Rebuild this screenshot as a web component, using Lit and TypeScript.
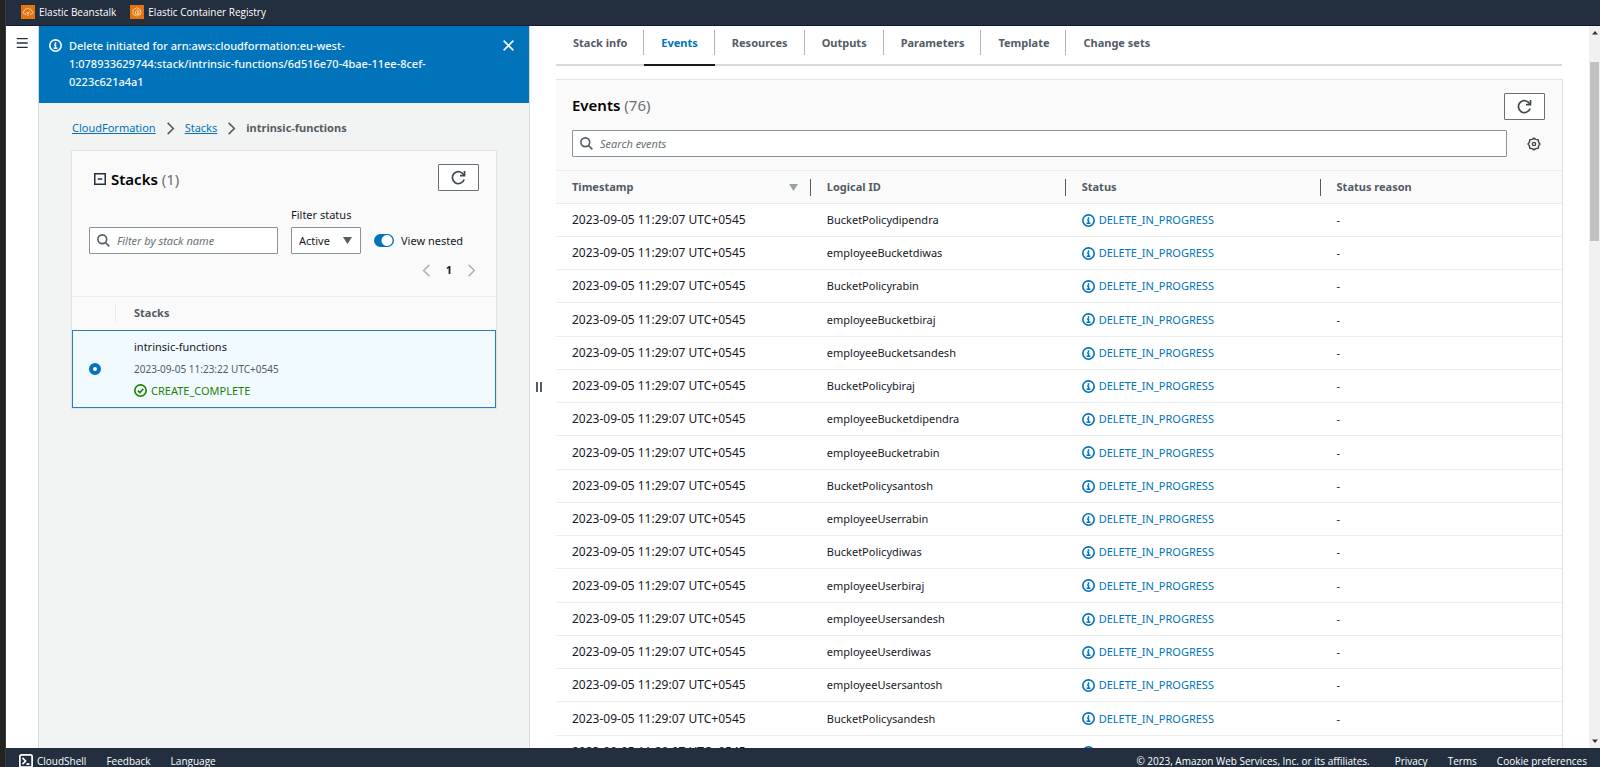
import { LitElement, html, css, svg } from "lit";
import { customElement, state } from "lit/decorators.js";

const LOGICAL_IDS = [
  "BucketPolicydipendra",
  "employeeBucketdiwas",
  "BucketPolicyrabin",
  "employeeBucketbiraj",
  "employeeBucketsandesh",
  "BucketPolicybiraj",
  "employeeBucketdipendra",
  "employeeBucketrabin",
  "BucketPolicysantosh",
  "employeeUserrabin",
  "BucketPolicydiwas",
  "employeeUserbiraj",
  "employeeUsersandesh",
  "employeeUserdiwas",
  "employeeUsersantosh",
  "BucketPolicysandesh",
  "employeeUserdipendra",
];

const TABS = ["Stack info", "Events", "Resources", "Outputs", "Parameters", "Template", "Change sets"];

const icon = (size: number, body: unknown) => html`<svg
  width=${size} height=${size} viewBox="0 0 16 16" fill="none"
  stroke="currentColor" stroke-width="2" aria-hidden="true">${body}</svg>`;

const infoIcon = (size = 13) => icon(size, svg`
  <circle cx="8" cy="8" r="7"/>
  <path d="M8 11.5V7.5H6.2M5.6 11.5h4.8M8 4v2" stroke-width="1.8"/>`);
const checkIcon = icon(13, svg`<circle cx="8" cy="8" r="7"/><path d="M4.8 8.2l2.4 2.3 4.2-4.4"/>`);
const closeIcon = icon(13, svg`<path d="M2 2l12 12M14 2L2 14"/>`);
const chevron = (size = 13) => icon(size, svg`<path d="M4.5 1l7 7-7 7"/>`);
const chevronLeft = icon(13, svg`<path d="M11.5 1l-7 7 7 7"/>`);
const searchIcon = icon(13, svg`<circle cx="6.5" cy="6.5" r="5.4"/><path d="M10.4 10.4L15.2 15.2"/>`);
const refreshIcon = icon(15, svg`<path d="M14 10.2A6.4 6.4 0 1 1 13.6 5.2" stroke-width="1.8"/><path d="M14.4 1v5H9.6" stroke-width="1.8"/>`);
const menuIcon = icon(14, svg`<path d="M2 3h12.500M2 8h12.500M2 13h12.500" stroke-width="1.5"/>`);
const gearIcon = icon(14, svg`
  <path d="M8 1.200l1.900 1.500 2.900.5.500 2.900L14.800 8l-1.500 1.900-.5 2.900-2.900.5L8 14.800l-1.900-1.500-2.900-.5-.5-2.900L1.200 8l1.500-1.900.5-2.900 2.900-.5z" stroke-width="1.700" stroke-linejoin="round"/>
  <circle cx="8" cy="8" r="1.900" stroke-width="1.600"/>`);
const collapseIcon = icon(12, svg`<path d="M1 1h14v14H1zM5 8h6"/>`);
const shellIcon = icon(14, svg`<rect x="1" y="1" width="14" height="14" rx="2"/><path d="M4 4.500l3.500 3.500L4 11.500M8.500 11.500H12"/>`);
const beanstalkIcon = html`<svg width="14" height="14" viewBox="0 0 28 28" aria-hidden="true">
  <rect width="28" height="28" fill="#e57310"/>
  <path d="M11 18H8c-4.500 0-4.500-6-.5-6.500C8 6.500 14 5 17 8.500c3-.5 4 1 4 3.500 4 .5 3.500 6 0 6h-3M14 22v-8M14 18l-3-3M14 16l4-3" fill="none" stroke="#ffe9d2" stroke-width="1.500"/></svg>`;
const registryIcon = html`<svg width="14" height="14" viewBox="0 0 28 28" aria-hidden="true">
  <rect width="28" height="28" fill="#e57310"/>
  <path d="M13 22.500l-7-4v-8.500l7.500-4.500 8 4.500v8.500L17 21M11 18v-5l4-3 3 2v6l-3 2.500zM15 13v6" fill="none" stroke="#ffe9d2" stroke-width="1.500"/></svg>`;

@customElement("app-root")
export class AppRoot extends LitElement {
  @state() private activeTab = "Events";

  static styles = css`
    :host {
      display: block;
      height: 100vh;
      overflow: hidden;
      font-family: "Noto Sans", "Open Sans", sans-serif;
      font-size: 11px;
      line-height: 18px;
      color: #16191f;
      background: #fff;
    }
    * { box-sizing: border-box; }
    svg { display: block; flex: none; }
    button, input, select { font: inherit; color: inherit; margin: 0; }
    button { background: none; border: 0; padding: 0; cursor: pointer; }
    a { color: inherit; text-decoration: none; }
    h2 { margin: 0; font-size: 15px; line-height: 20px; font-weight: 600; color: #000; }
    h2 span { font-weight: 400; color: #687078; }

    .shell { display: flex; height: 100%; }
    .edge { width: 6px; flex: none; background: #232323; border-right: 1px solid #3c3c3c; }
    .page { flex: 1; min-width: 0; display: flex; flex-direction: column; }

    .topbar {
      display: flex; align-items: center; gap: 14px; height: 26px; flex: none;
      padding: 0 15px 1px; background: #232f3e; border-bottom: 1px solid #0d1f35;
      color: #fff; font-family: "Open Sans", "Noto Sans", sans-serif; font-size: 10px; font-weight: 500;
    }
    .topbar a { display: flex; align-items: center; gap: 4px; }
    .body { flex: 1; min-height: 0; display: flex; }
    .rail { width: 32px; flex: none; padding-top: 10px; }
    .rail button { display: block; margin: 0 auto; color: #232f3e; }

    .side {
      width: 492px; flex: none; background: #f2f3f3;
      border-left: 1px solid #d5dbdb; border-right: 1px solid #d5dbdb;
    }
    .flash {
      display: flex; gap: 7px; padding: 11px 14px 11px 10px;
      background: #0073bb; color: #f5fbff; font-weight: 500; min-height: 77px;
    }
    .flash p { margin: 0; flex: 1; padding-right: 60px; }
    .flash svg { margin-top: 2px; }
    .flash button { align-self: flex-start; }
    .crumbs { display: flex; align-items: center; gap: 8px; padding: 16px 33px 14px; color: #545b64; font-weight: 700; }
    .crumbs a { color: #0073bb; text-decoration: underline; font-weight: 400; }

    .card { background: #fafafa; box-shadow: 0 0 1px 1px #e1e5e5; }
    .stacks { margin: 0 33px; }
    .stacks-head { display: flex; align-items: center; justify-content: space-between; padding: 13px 17px 0 22px; }
    .stacks-title { display: flex; align-items: center; gap: 5px; padding-top: 2px; }
    .stacks-title button { color: #232f3e; }
    .refresh {
      display: grid; place-items: center; width: 41px; height: 27px;
      background: #fff; border: 1px solid #687078; border-radius: 1px; color: #414750;
    }
    .filters { display: flex; align-items: flex-end; gap: 13px; padding: 15px 17px 0; }
    .search { display: flex; align-items: center; gap: 7px; height: 27px; padding: 0 7px; background: #fff; border: 1px solid #879596; border-radius: 1px; color: #545b64; }
    .search input { flex: 1; min-width: 0; border: 0; outline: 0; background: none; padding: 0; }
    .search input::placeholder { color: #687078; font-style: italic; opacity: 1; }
    .filters .search { width: 189px; }
    .status-filter { display: flex; flex-direction: column; gap: 3px; }
    .select { display: flex; align-items: center; position: relative; }
    .select select { appearance: none; width: 70px; height: 27px; padding: 0 7px; background: #fff; border: 1px solid #879596; border-radius: 1px; }
    .select svg { position: absolute; right: 9px; color: #545b64; pointer-events: none; }
    .toggle { display: flex; align-items: center; gap: 7px; height: 27px; }
    .toggle input {
      appearance: none; width: 20px; height: 13px; border-radius: 7px;
      background: radial-gradient(circle at 13px 50%, #fff 5px, #0073bb 6px);
    }
    .toggle input:not(:checked) { background: radial-gradient(circle at 7px 50%, #fff 5px, #687078 6px); }
    .pager { display: flex; justify-content: flex-end; align-items: center; gap: 11px; padding: 7px 18px 17px; color: #aab7b8; }
    .pager span { color: #16191f; font-weight: 700; padding: 0 2px; }
    table { width: 100%; border-collapse: collapse; table-layout: fixed; text-align: left; }
    th { font-weight: 700; color: #545b64; padding: 0; }
    .stack-table th { height: 33px; border-top: 1px solid #eaeded; }
    .stack-table .pick { width: 44px; }
    .stack-table .pick span { display: block; height: 18px; border-right: 1px solid #eaeded; }
    .stack-table .name { padding-left: 18px; }
    .stack-table tbody tr { outline: 1px solid #2b7bbd; outline-offset: -1px; background: #f1faff; height: 78px; }
    .stack-table td { padding: 0; }
    .stack-table td:first-child { padding-left: 17px; }
    .stack-table input { appearance: none; display: block; width: 12px; height: 12px; margin: 0; border: 4px solid #0073bb; border-radius: 50%; background: #fff; }
    .stack-name { display: flex; flex-direction: column; gap: 4px; }
    .stack-name small { font-size: 10px; color: #545b64; }
    .ok { display: flex; align-items: center; gap: 4px; color: #1d8102; }

    .splitter { width: 26px; flex: none; display: flex; align-items: center; justify-content: center; padding-right: 9px; }
    .splitter button { width: 6px; height: 10px; border: solid #545b64; border-width: 0 2px; }

    .main { flex: 1; min-width: 0; padding-right: 27px; overflow: hidden; }
    .tabs { display: flex; height: 40px; border-bottom: 2px solid #d5dbdb; padding-top: 4px; }
    .tabs button { position: relative; padding: 0 17px 9px; height: 36px; color: #545b64; font-weight: 700; border-bottom: 2px solid transparent; }
    .tabs button:not(:last-child)::after { content: ""; position: absolute; right: 0; top: 0; height: 25px; border-right: 1px solid #aab7b8; }
    .tabs .on { color: #0073bb; border-bottom-color: #16191f; }
    .events { margin-top: 14px; }
    .events-head { display: flex; justify-content: space-between; align-items: center; padding: 13px 17px 10px 16px; }
    .events-head h2 { padding-bottom: 3px; }
    .events-tools { display: flex; align-items: center; gap: 20px; padding: 0 21px 13px 16px; color: #414750; }
    .events-tools .search { flex: 1; }
    .events-table th { height: 33px; border-top: 1px solid #eaeded; border-bottom: 1px solid #eaeded; }
    .events-table .reason { width: 24%; }
    .head { display: flex; align-items: center; justify-content: space-between; height: 17px; padding: 0 12px 0 16px; border-right: 1px solid #545b64; }
    th:last-child .head { border: 0; }
    .head svg { color: #95a5a6; }
    .events-table tbody { background: #fff; }
    .events-table td { height: 33px; padding: 0 16px; border-bottom: 1px solid #eaeded; white-space: nowrap; }
    .events-table tr:nth-child(4n) td { height: 34px; }
    .events-table .time { font-size: 12px; }
    .info { display: flex; align-items: center; gap: 4px; color: #0073bb; }

    .scroll { width: 11px; flex: none; background: #f1f1f1; display: flex; flex-direction: column; align-items: center; justify-content: space-between; padding: 4px 0; }
    .thumb { width: 9px; height: 179px; background: #c1c1c1; margin: 27px 0 auto; }

    .footer {
      display: flex; align-items: center; gap: 20px; height: 19px; flex: none;
      padding: 7px 13px 0; background: #232f3e; color: #fff; overflow: hidden;
      font-family: "Open Sans", "Noto Sans", sans-serif; font-size: 10px; font-weight: 500;
    }
    .footer a { display: flex; align-items: center; gap: 4px; flex: none; }
    .footer .legal { margin-left: auto; padding-right: 5px; }
  `;

  render() {
    return html`
      <div class="shell">
        <div class="edge"></div>
        <div class="page">
          <nav class="topbar" aria-label="Favorites">
            <a href="#beanstalk">${beanstalkIcon}Elastic Beanstalk</a>
            <a href="#ecr">${registryIcon}Elastic Container Registry</a>
          </nav>
          <div class="body">
            <div class="rail"><button aria-label="Open menu">${menuIcon}</button></div>
            ${this.renderSide()}
            <div class="splitter"><button aria-label="Resize panel"></button></div>
            ${this.renderMain()}
            <div class="scroll">
              <svg width="6" height="5" viewBox="0 0 6 5"><path d="M0 4.500L3 1l3 3.500z" fill="#333"/></svg>
              <div class="thumb"></div>
              <svg width="6" height="5" viewBox="0 0 6 5"><path d="M0 .5L3 4 6 .5z" fill="#333"/></svg>
            </div>
          </div>
          <footer class="footer">
            <a href="#shell">${shellIcon}CloudShell</a>
            <a href="#feedback">Feedback</a>
            <a href="#language">Language</a>
            <span class="legal">© 2023, Amazon Web Services, Inc. or its affiliates.</span>
            <a href="#privacy">Privacy</a>
            <a href="#terms">Terms</a>
            <a href="#cookies">Cookie preferences</a>
          </footer>
        </div>
      </div>`;
  }

  private renderSide() {
    return html`
      <aside class="side">
        <div class="flash" role="status">
          ${infoIcon()}
          <p>Delete initiated for arn:aws:cloudformation:eu-west-1:078933629744:stack/intrinsic-functions/6d516e70-4bae-11ee-8cef-0223c621a4a1</p>
          <button aria-label="Dismiss">${closeIcon}</button>
        </div>
        <nav class="crumbs" aria-label="Breadcrumb">
          <a href="#cloudformation">CloudFormation</a>${chevron()}
          <a href="#stacks">Stacks</a>${chevron()}
          <span>intrinsic-functions</span>
        </nav>
        <section class="card stacks">
          <div class="stacks-head">
            <div class="stacks-title">
              <button aria-label="Collapse">${collapseIcon}</button>
              <h2>Stacks <span>(1)</span></h2>
            </div>
            <button class="refresh" aria-label="Refresh stacks">${refreshIcon}</button>
          </div>
          <div class="filters">
            <label class="search">${searchIcon}<input aria-label="Filter by stack name" placeholder="Filter by stack name" /></label>
            <div class="status-filter">
              <label for="status">Filter status</label>
              <div class="select">
                <select id="status"><option>Active</option></select>
                <svg width="9" height="7" viewBox="0 0 9 7" aria-hidden="true"><path d="M0 0h9L4.500 7z" fill="currentColor"/></svg>
              </div>
            </div>
            <label class="toggle"><input type="checkbox" role="switch" checked />View nested</label>
          </div>
          <div class="pager">
            <button aria-label="Previous page">${chevronLeft}</button><span>1</span><button aria-label="Next page">${chevron()}</button>
          </div>
          <table class="stack-table">
            <thead><tr><th class="pick"><span></span></th><th class="name">Stacks</th></tr></thead>
            <tbody>
              <tr>
                <td><input type="radio" name="stack" checked aria-label="intrinsic-functions" /></td>
                <td class="name">
                  <div class="stack-name">
                    <span>intrinsic-functions</span>
                    <small>2023-09-05 11:23:22 UTC+0545</small>
                    <span class="ok">${checkIcon}CREATE_COMPLETE</span>
                  </div>
                </td>
              </tr>
            </tbody>
          </table>
        </section>
      </aside>`;
  }

  private renderMain() {
    return html`
      <main class="main">
        <div class="tabs" role="tablist">
          ${TABS.map((name) => html`<button role="tab"
            class=${name === this.activeTab ? "on" : ""}
            aria-selected=${name === this.activeTab ? "true" : "false"}
            @click=${() => (this.activeTab = name)}>${name}</button>`)}
        </div>
        <section class="card events">
          <div class="events-head">
            <h2>Events <span>(76)</span></h2>
            <button class="refresh" aria-label="Refresh events">${refreshIcon}</button>
          </div>
          <div class="events-tools">
            <label class="search">${searchIcon}<input aria-label="Search events" placeholder="Search events" /></label>
            <button aria-label="Preferences">${gearIcon}</button>
          </div>
          <table class="events-table">
            <thead>
              <tr>
                <th><div class="head">Timestamp
                  <svg width="9" height="7" viewBox="0 0 9 7" aria-hidden="true"><path d="M0 0h9L4.500 7z" fill="currentColor"/></svg></div></th>
                <th><div class="head">Logical ID</div></th>
                <th><div class="head">Status</div></th>
                <th class="reason"><div class="head">Status reason</div></th>
              </tr>
            </thead>
            <tbody>
              ${LOGICAL_IDS.map((id) => html`<tr>
                <td class="time">2023-09-05 11:29:07 UTC+0545</td>
                <td>${id}</td>
                <td><span class="info">${infoIcon()}DELETE_IN_PROGRESS</span></td>
                <td>-</td>
              </tr>`)}
            </tbody>
          </table>
        </section>
      </main>`;
  }
}
